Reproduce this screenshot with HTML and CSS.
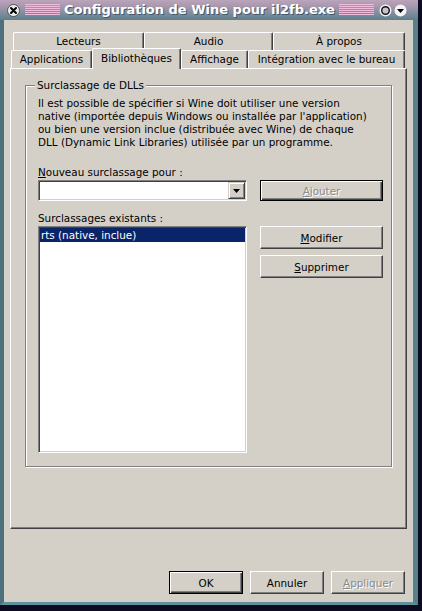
FILE: index.html
```html
<!DOCTYPE html>
<html lang="fr">
<head>
<meta charset="utf-8">
<title>Configuration de Wine pour il2fb.exe</title>
<link rel="stylesheet" href="styles.css">
</head>
<body>
<div class="window">
  <div class="titlebar">
    <svg class="tb-btn" width="13" height="13" viewBox="0 0 13 13"><circle cx="6.5" cy="6.5" r="6" fill="#ececec" stroke="#3a3a3a" stroke-width="0.8"/><path d="M4 4 L9 9 M9 4 L4 9" stroke="#000" stroke-width="2" stroke-linecap="round"/></svg>
    <span class="stripes"></span>
    <span class="title">Configuration de Wine pour il2fb.exe</span>
    <span class="stripes"></span>
    <svg class="tb-btn" width="13" height="13" viewBox="0 0 13 13"><circle cx="6.5" cy="6.5" r="6" fill="#f0f0f0"/><circle cx="6.5" cy="6.5" r="3.8" fill="#c8c0cc" stroke="#111" stroke-width="1.4"/></svg>
    <svg class="tb-btn" width="13" height="13" viewBox="0 0 13 13"><circle cx="6.5" cy="6.5" r="6" fill="#f4f4f4"/><path d="M3 5 L10 5 L6.5 9 Z" fill="#000"/></svg>
  </div>
  <div class="client">
    <div class="tabrow back">
      <div class="tab w-lect">Lecteurs</div>
      <div class="tab w-audio">Audio</div>
      <div class="tab w-apropos">À propos</div>
    </div>
    <div class="tabrow front">
      <div class="tab w-apps">Applications</div>
      <div class="tab sel w-biblio">Bibliothèques</div>
      <div class="tab w-affich">Affichage</div>
      <div class="tab w-integ">Intégration avec le bureau</div>
    </div>
    <div class="panel">
      <fieldset class="group">
        <legend>Surclassage de DLLs</legend>
        <p class="desc">Il est possible de spécifier si Wine doit utiliser une version<br>native (importée depuis Windows ou installée par l'application)<br>ou bien une version inclue (distribuée avec Wine) de chaque<br>DLL (Dynamic Link Libraries) utilisée par un programme.</p>
        <div class="grid">
          <div class="lbl lbl-new"><u>N</u>ouveau surclassage pour :</div>
          <div class="combo">
            <div class="arrow"><svg width="7" height="4" viewBox="0 0 7 4"><path d="M0 0 L7 0 L3.5 4 Z" fill="#000"/></svg></div>
          </div>
          <button class="btn default disabled add"><u>A</u>jouter</button>
          <div class="lbl lbl-ex">Surclassages existants :</div>
          <div class="list">
            <div class="item selected">rts (native, inclue)</div>
          </div>
          <div class="btncol">
            <button class="btn side"><u>M</u>odifier</button>
            <button class="btn side"><u>S</u>upprimer</button>
          </div>
        </div>
      </fieldset>
    </div>
    <div class="actions">
      <button class="btn default act">OK</button>
      <button class="btn act">Annuler</button>
      <button class="btn disabled act"><u>A</u>ppliquer</button>
    </div>
  </div>
</div>
</body>
</html>
```
FILE: styles.css
```css
html, body {
  margin: 0;
  padding: 0;
}
body {
  width: 422px;
  height: 611px;
  overflow: hidden;
  background: #0d0b22;
  font-family: "DejaVu Sans", "Noto Sans", sans-serif;
  font-size: 10.4px;
  color: #000;
}
.window {
  width: 418px;
  height: 605px;
  display: flex;
  flex-direction: column;
}
.titlebar {
  height: 20px;
  flex: none;
  display: flex;
  align-items: center;
  padding: 0 11px 0 7px;
  background: linear-gradient(to bottom, #bba5bb 0%, #a596ac 35%, #7a8c9c 70%, #5d7e8b 100%);
}
.tb-btn {
  flex: none;
  display: block;
}
.tb-btn + .stripes { margin-left: 5px; }
.stripes {
  flex: 1;
  height: 12px;
  background: repeating-linear-gradient(to bottom, #eebcda 0 1px, transparent 1px 2px);
}
.title {
  flex: none;
  margin: 0 4px;
  color: #fff;
  font-weight: bold;
  font-size: 13px;
  line-height: 16px;
  text-shadow: 1px 1px 0 #44566a;
  white-space: nowrap;
}
.stripes + .tb-btn { margin-left: 5px; }
.tb-btn + .tb-btn { margin-left: 2px; }

.client {
  flex: 1;
  background: #d4d0c8;
  border-left: 4px solid #4e707c;
  border-right: 5px solid #56828e;
  border-bottom: 3px solid #5f909c;
  padding: 12px 6px 0 6px;
  display: flex;
  flex-direction: column;
}
.tabrow {
  display: flex;
  flex: none;
}
.tabrow.back {
  height: 18px;
  margin-left: 3px;
}
.tabrow.front {
  height: 20px;
  margin-top: -2px;
  margin-left: 1px;
  align-items: flex-end;
}
.tab {
  box-sizing: border-box;
  height: 18px;
  background: #d4d0c8;
  border-top: 1px solid #fff;
  border-left: 1px solid #fff;
  border-right: 1px solid #404040;
  box-shadow: inset -1px 0 0 #808080;
  border-radius: 2px 2px 0 0;
  display: flex;
  align-items: center;
  justify-content: center;
  white-space: nowrap;
  padding-bottom: 1px;
}
.tab.sel {
  height: 21px;
  margin-bottom: -1px;
  position: relative;
  z-index: 1;
  padding-bottom: 3px;
}
.w-lect { width: 131px; }
.w-audio { width: 129px; }
.w-apropos { width: 132px; }
.w-apps { width: 81px; }
.w-biblio { width: 89px; }
.w-affich { width: 67px; }
.w-integ { width: 157px; }

.panel {
  box-sizing: border-box;
  height: 461px;
  flex: none;
  border-top: 1px solid #fff;
  border-left: 1px solid #fff;
  border-right: 1px solid #404040;
  border-bottom: 1px solid #404040;
  box-shadow: inset -1px -1px 0 #808080;
  padding: 10px 14px 0 14px;
}
.group {
  box-sizing: border-box;
  height: 388px;
  margin: 0;
  min-width: 0;
  border: 1px solid #808080;
  box-shadow: inset 1px 1px 0 #fff, 1px 1px 0 #fff;
  padding: 5px 8px 0 12px;
}
.group legend {
  margin-left: -3px;
  padding: 0 2px;
  line-height: 13px;
  background: #d4d0c8;
}
.desc {
  margin: 0;
  line-height: 13px;
  white-space: nowrap;
}
.grid {
  display: grid;
  grid-template-columns: 209px 123px;
  column-gap: 13px;
  grid-template-areas:
    "lnew ."
    "combo add"
    "lex ."
    "list col";
  margin-top: 17px;
}
.lbl {
  line-height: 13px;
  white-space: nowrap;
}
.lbl-new { grid-area: lnew; }
.lbl-ex { grid-area: lex; margin-top: 11px; }
.combo {
  grid-area: combo;
  margin-top: 1px;
  box-sizing: border-box;
  height: 21px;
  background: #fff;
  border: 1px solid;
  border-color: #808080 #fff #fff #808080;
  box-shadow: inset 1px 1px 0 #404040, inset -1px -1px 0 #d4d0c8;
  padding: 1px 1px 1px 0;
  display: flex;
  justify-content: flex-end;
}
.arrow {
  box-sizing: border-box;
  width: 17px;
  height: 17px;
  background: #d4d0c8;
  border: 1px solid;
  border-color: #d4d0c8 #404040 #404040 #d4d0c8;
  box-shadow: inset 1px 1px 0 #fff, inset -1px -1px 0 #808080;
  display: flex;
  align-items: center;
  justify-content: center;
}
.arrow svg { display: block; }

.btn {
  box-sizing: border-box;
  margin: 0;
  padding: 0;
  font: inherit;
  color: #000;
  background: #d4d0c8;
  border: 1px solid;
  border-color: #fff #404040 #404040 #fff;
  box-shadow: inset -1px -1px 0 #808080;
  display: flex;
  align-items: center;
  justify-content: center;
  white-space: nowrap;
}
.btn.default {
  border: 1px solid #000;
  box-shadow: inset 1px 1px 0 #fff, inset -1px -1px 0 #404040, inset -2px -2px 0 #808080;
}
.btn.disabled {
  color: #8a8a8a;
  text-shadow: 1px 1px 0 #fff;
}
.add {
  grid-area: add;
  margin-top: 1px;
  height: 21px;
}
.list {
  grid-area: list;
  margin-top: 1px;
  box-sizing: border-box;
  height: 227px;
  background: #fff;
  border: 1px solid;
  border-color: #808080 #fff #fff #808080;
  box-shadow: inset 1px 1px 0 #404040, inset -1px -1px 0 #d4d0c8;
  padding: 1px;
}
.item {
  height: 14px;
  line-height: 14px;
  padding-left: 1px;
  white-space: nowrap;
}
.item.selected {
  background: #0a246a;
  color: #fff;
}
.btncol {
  grid-area: col;
  margin-top: 1px;
  display: flex;
  flex-direction: column;
  gap: 6px;
}
.side { height: 23px; }

.actions {
  display: flex;
  justify-content: flex-end;
  gap: 7px;
  margin-top: 42px;
  padding-right: 2px;
}
.act {
  width: 74px;
  height: 23px;
}
```
